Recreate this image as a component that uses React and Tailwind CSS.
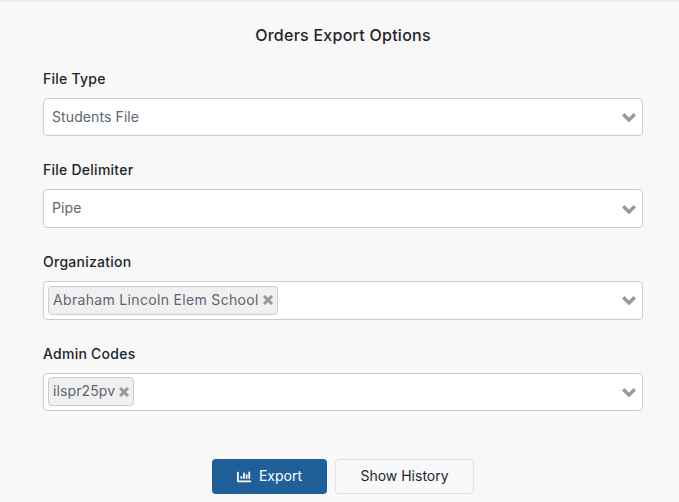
import React from "react";
import { FaChartBar } from "react-icons/fa";

const font = "font-['Inter','Noto_Sans',sans-serif]";

function Tag({ label, wide }) {
  return (
    <span className={`flex h-[29px] items-center gap-1 rounded-[4px] border border-[#cccccc] bg-[#f0f0f0] pr-1 pb-[2px] pl-1 text-[14px] text-[#5c6670] ${wide ? "tracking-[0.33px]" : "tracking-[0.1px]"}`}>
      {label}
      <svg viewBox="0 0 10 10" className="mt-[2px] h-[10px] w-[10px]" fill="none" stroke="#999999" strokeWidth="3">
        <path d="M1 1l8 8M9 1l-8 8" />
      </svg>
    </span>
  );
}

function Chevron() {
  return (
    <svg viewBox="0 0 14 10" className="h-[10px] w-[14px]" fill="none" stroke="#999999" strokeWidth="3.4">
      <path d="M1.2 2.2L7 8l5.8-5.8" />
    </svg>
  );
}

function Field({ label, value, tag, wide }) {
  return (
    <div className="mb-[24px]">
      <label className="mb-2 block h-[21px] text-[14px] leading-[19px] font-medium tracking-[0.25px] text-[#212529]">{label}</label>
      <div className="flex h-[38.6px] items-center justify-between rounded-[4px] border border-[#cccccc] bg-white pr-[6px]">
        {tag ? (
          <div className="flex items-center pl-1">
            <Tag label={tag} wide={wide} />
          </div>
        ) : (
          <span className="pb-[2px] pl-2 text-[14px] tracking-[0.1px] text-[#5c6670]">{value}</span>
        )}
        <Chevron />
      </div>
    </div>
  );
}

export default function App() {
  return (
    <div className={`${font} h-[502px] overflow-hidden border-t-2 border-[#e9ecef] bg-[#f8f8f8]`}>
      <div className="pr-[36px] pl-[43px]">
        <h2 className="mt-[22px] mb-[22.8px] h-[22px] text-center text-[16px] leading-[22px] font-medium tracking-[0.25px] text-[#212529]">
          Orders Export Options
        </h2>
        <Field label="File Type" value="Students File" />
        <Field label="File Delimiter" value="Pipe" />
        <Field label="Organization" tag="Abraham Lincoln Elem School" wide />
        <Field label="Admin Codes" tag="ilspr25pv" />
        <div className="mt-[48px] flex justify-center gap-2">
          <button className="flex h-[35px] w-[115px] items-center justify-center gap-2 rounded-[4px] bg-[#1f6098] pb-[2px] text-[14px] text-white">
            <FaChartBar className="mt-[2px] h-[14px] w-[14px]" />
            Export
          </button>
          <button className="h-[35px] w-[139px] rounded-[4px] border border-[#dee2e6] bg-[#f8f9fa] pb-[2px] text-[14px] text-[#212529]">
            Show History
          </button>
        </div>
      </div>
    </div>
  );
}
